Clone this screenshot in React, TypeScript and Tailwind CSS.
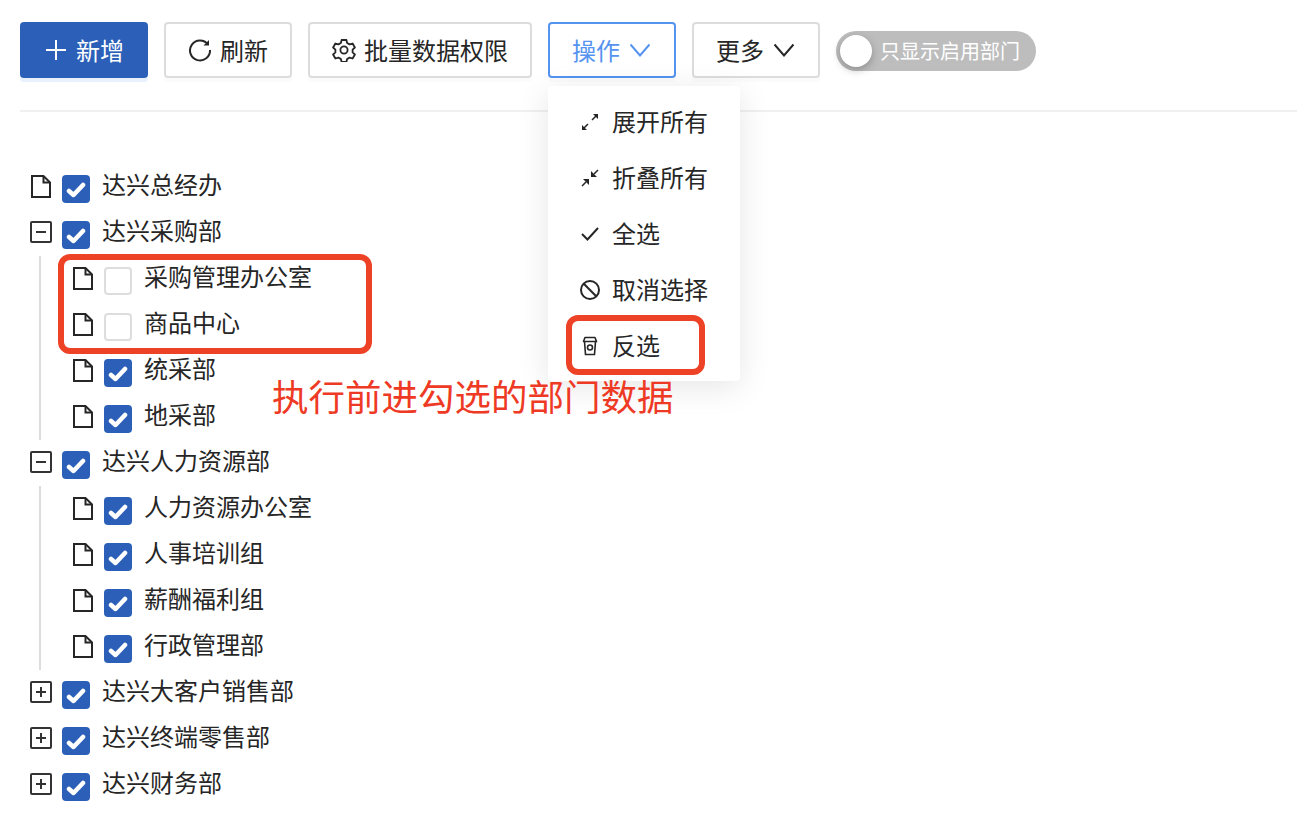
import React from "react";

const FileIcon = () => (
  <svg width="20" height="23" viewBox="0 0 20 23" fill="none" stroke="#262626" strokeWidth="2" className="shrink-0">
    <path d="M1 1H12.500L19 7.500V22H1Z" />
    <path d="M12.500 1V7.500H19" />
  </svg>
);

const BoxIcon = ({ plus }: { plus?: boolean }) => (
  <svg width="22" height="22" viewBox="0 0 22 22" fill="none" stroke="#333" className="mt-[-1px] shrink-0">
    <rect x="1" y="1" width="20" height="20" rx="1" strokeWidth="2" />
    <path d="M6 11H16" strokeWidth="2" />
    {plus && <path d="M11 6V16" strokeWidth="2" />}
  </svg>
);

const Check = ({ on }: { on: boolean }) =>
  on ? (
    <span className="flex h-7 w-7 shrink-0 items-center justify-center rounded-[4px] bg-[#2b5fb8]">
      <svg width="20" height="17" viewBox="0 0 20 17" fill="none" stroke="white" strokeWidth="4.500" strokeLinecap="round" strokeLinejoin="round">
        <path d="M3 10L7.500 14L17 4" />
      </svg>
    </span>
  ) : (
    <span className="block h-7 w-7 shrink-0 rounded-[4px] border-2 border-[#dddddd] bg-white" />
  );

const Row = ({
  label,
  child,
  on = true,
  type = "file",
}: {
  label: string;
  child?: boolean;
  on?: boolean;
  type?: "file" | "minus" | "plus";
}) => (
  <div className={`flex h-[46px] items-center ${child ? "pl-[53px]" : "pl-[11px]"}`}>
    <span className="flex w-[20px] justify-center">
      {type === "file" ? <FileIcon /> : <BoxIcon plus={type === "plus"} />}
    </span>
    <span className="ml-[11px] mt-[6px]">
      <Check on={on} />
    </span>
    <span className="ml-3 -mt-[4px] text-[24px] leading-[46px] text-[#262626]">{label}</span>
  </div>
);

const Btn = ({
  children,
  w,
  active,
}: {
  children: React.ReactNode;
  w: string;
  active?: boolean;
}) => (
  <button
    className={`flex h-14 items-center justify-center gap-[10px] rounded-[4px] border-2 bg-white text-[24px] shadow-[0_4px_0_rgba(0,0,0,0.015)] ${w} ${
      active ? "border-[#5593f0] text-[#5593f0]" : "border-[#dcdcdc] text-[#262626]"
    }`}
  >
    {children}
  </button>
);

const Chevron = ({ color }: { color: string }) => (
  <svg width="20" height="14" viewBox="0 0 20 14" fill="none" stroke={color} strokeWidth="2" className="mr-[2px]">
    <path d="M0.500 1.500L10 12.500L19.500 1.500" />
  </svg>
);

const MenuItem = ({ icon, label }: { icon: React.ReactNode; label: string }) => (
  <div className="flex h-14 items-center pl-[30px] text-[24px] text-[#262626]">
    <span className="flex w-6 justify-center">{icon}</span>
    <span className="ml-[10px] -mt-[2px]">{label}</span>
  </div>
);

const mi = { fill: "none", stroke: "#262626", strokeWidth: 2 };

export default function App() {
  return (
    <div
      className="relative h-[824px] w-[1306px] overflow-hidden bg-white pl-5 pr-[9px] pt-[22px]"
      style={{ fontFamily: '"Noto Sans CJK SC", "Noto Sans", sans-serif' }}
    >
      <div className="flex items-start gap-4">
        <button className="flex h-14 w-32 items-center justify-center gap-[10px] rounded-[4px] bg-[#2b5fb8] text-[24px] text-white shadow-[0_4px_0_rgba(50,120,230,0.1)]">
          <svg width="20" height="20" viewBox="0 0 20 20" stroke="white" strokeWidth="2" className="ml-[2px]">
            <path d="M10 0V20M0 10H20" />
          </svg>
          新增
        </button>
        <Btn w="w-32">
          <svg width="24" height="24" viewBox="0 0 24 24" fill="none" stroke="#262626" strokeWidth="2" className="mr-[-2px]">
            <path d="M20 6.500A10 10 0 1 0 22 12" />
            <path d="M21 2L21 7.500L15.500 7.500Z" fill="#262626" stroke="none" />
          </svg>
          刷新
        </Btn>
        <Btn w="w-56">
          <svg width="24" height="24" viewBox="0 0 24 24" fill="none" stroke="#262626" strokeWidth="1.800" strokeLinejoin="round" className="mr-[-2px]">
            <path d="M9.600 2h4.800l.7 3 2.500 1.400 3-.9 2.300 4-2.300 2.100v2.800l2.300 2.100-2.300 4-3-.9-2.500 1.400-.7 3H9.600l-.7-3-2.500-1.400-3 .9-2.300-4 2.300-2.100v-2.800L1.100 9.500l2.300-4 3 .9 2.500-1.400z" />
            <circle cx="12" cy="12" r="3.600" />
          </svg>
          批量数据权限
        </Btn>
        <Btn w="w-32" active>
          操作
          <Chevron color="#5593f0" />
        </Btn>
        <Btn w="w-32">
          更多
          <Chevron color="#262626" />
        </Btn>
        <div className="mt-[9px] flex h-10 w-[200px] items-center rounded-full bg-[#bdbdbd] pl-1">
          <span className="h-8 w-8 rounded-full bg-white shadow-[0_3px_8px_rgba(0,0,0,0.25)]" />
          <span className="ml-2 text-[20px] text-white">只显示启用部门</span>
        </div>
      </div>

      <div className="mt-8 h-[2px] bg-[#f0f0f0]" />

      <div className="mt-[51px]">
        <Row label="达兴总经办" />
        <Row label="达兴采购部" type="minus" />
        <div className="relative">
          <span className="absolute bottom-[-1px] left-[19px] top-[1px] w-[2px] bg-[#dddddd]" />
          <Row child on={false} label="采购管理办公室" />
          <Row child on={false} label="商品中心" />
          <Row child label="统采部" />
          <Row child label="地采部" />
        </div>
        <Row label="达兴人力资源部" type="minus" />
        <div className="relative">
          <span className="absolute bottom-[-1px] left-[19px] top-[1px] w-[2px] bg-[#dddddd]" />
          <Row child label="人力资源办公室" />
          <Row child label="人事培训组" />
          <Row child label="薪酬福利组" />
          <Row child label="行政管理部" />
        </div>
        <Row label="达兴大客户销售部" type="plus" />
        <Row label="达兴终端零售部" type="plus" />
        <Row label="达兴财务部" type="plus" />
      </div>

      <div className="absolute left-[548px] top-[86px] h-[295px] w-[192px] rounded-[4px] bg-white py-2 shadow-[0_6px_32px_rgba(0,0,0,0.1)]">
        <MenuItem
          label="展开所有"
          icon={
            <svg width="18" height="18" viewBox="0 0 18 18" {...mi}>
              <path d="M2 16L7 11M11 7L16 2" strokeWidth="1.500" />
              <path d="M1 12V17H6Z M17 6V1H12Z" fill="#262626" stroke="none" />
            </svg>
          }
        />
        <MenuItem
          label="折叠所有"
          icon={
            <svg width="18" height="18" viewBox="0 0 18 18" {...mi}>
              <path d="M1 17L5 13M13 5L17 1" strokeWidth="1.500" />
              <path d="M2 10H8V16Z M16 8H10V2Z" fill="#262626" stroke="none" />
            </svg>
          }
        />
        <MenuItem
          label="全选"
          icon={
            <svg width="18" height="14" viewBox="0 0 18 14" {...mi}>
              <path d="M1 7L6.500 12.500L17 1" />
            </svg>
          }
        />
        <MenuItem
          label="取消选择"
          icon={
            <svg width="20" height="20" viewBox="0 0 20 20" {...mi}>
              <circle cx="10" cy="10" r="9" />
              <path d="M3.800 3.800L16.200 16.200" />
            </svg>
          }
        />
        <MenuItem
          label="反选"
          icon={
            <svg width="16" height="20" viewBox="0 0 16 20" {...mi} strokeWidth="1.600">
              <path d="M3 1.500H13L14.500 5.500H1.500Z" strokeLinejoin="round" />
              <path d="M2.500 5.500L3.500 18.500H12.500L13.500 5.500" />
              <circle cx="8" cy="11.500" r="2.500" />
            </svg>
          }
        />
      </div>

      <div className="pointer-events-none absolute left-[58px] top-[254px] h-[100px] w-[314px] rounded-[12px] border-[6px] border-[#ee4227]" />
      <div className="pointer-events-none absolute left-[566px] top-[315px] h-[60px] w-[139px] rounded-[12px] border-[6px] border-[#ee4227]" />
      <div className="absolute left-[272px] top-[371px] whitespace-nowrap text-[36.5px] leading-[50px] text-[#ee3a24]">
        执行前进勾选的部门数据
      </div>
    </div>
  );
}
